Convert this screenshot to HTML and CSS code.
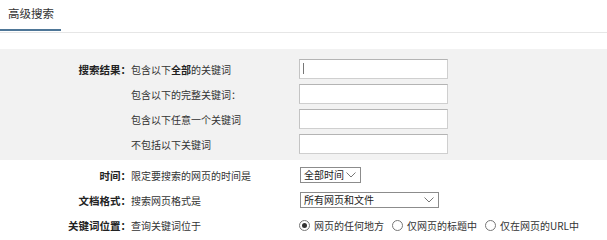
FILE: index.html
```html
<!DOCTYPE html>
<html lang="zh-CN">
<head>
<meta charset="utf-8">
<title>高级搜索</title>
<link rel="stylesheet" href="styles.css">
</head>
<body>
<div class="tabs">
  <div class="tab active">高级搜索</div>
</div>

<div class="section grey">
  <div class="row">
    <div class="label">搜索结果：</div>
    <div class="desc">包含以下<b>全部</b>的关键词</div>
    <div class="control"><div class="field"><input class="text" type="text"><span class="caret"></span></div></div>
  </div>
  <div class="row">
    <div class="label"></div>
    <div class="desc">包含以下的完整关键词：</div>
    <div class="control"><div class="field"><input class="text" type="text"></div></div>
  </div>
  <div class="row">
    <div class="label"></div>
    <div class="desc">包含以下任意一个关键词</div>
    <div class="control"><div class="field"><input class="text" type="text"></div></div>
  </div>
  <div class="row">
    <div class="label"></div>
    <div class="desc">不包括以下关键词</div>
    <div class="control"><div class="field"><input class="text" type="text"></div></div>
  </div>
</div>

<div class="section plain">
  <div class="row short">
    <div class="label">时间：</div>
    <div class="desc">限定要搜索的网页的时间是</div>
    <div class="control">
      <div class="select sel-time"><span>全部时间</span>
        <svg class="chev" viewBox="0 0 10 6" width="10" height="6"><path d="M0.5 0.5 L5 5 L9.5 0.5" fill="none" stroke="#777" stroke-width="1"/></svg>
      </div>
    </div>
  </div>
  <div class="row short">
    <div class="label">文档格式：</div>
    <div class="desc">搜索网页格式是</div>
    <div class="control">
      <div class="select sel-format"><span>所有网页和文件</span>
        <svg class="chev" viewBox="0 0 10 6" width="10" height="6"><path d="M0.5 0.5 L5 5 L9.5 0.5" fill="none" stroke="#777" stroke-width="1"/></svg>
      </div>
    </div>
  </div>
  <div class="row short">
    <div class="label">关键词位置：</div>
    <div class="desc">查询关键词位于</div>
    <div class="control radios">
      <label class="radio"><span class="dot on"></span>网页的任何地方</label>
      <label class="radio"><span class="dot"></span>仅网页的标题中</label>
      <label class="radio"><span class="dot"></span>仅在网页的URL中</label>
    </div>
  </div>
</div>
</body>
</html>
```

FILE: styles.css
```css
html, body {
  margin: 0;
  padding: 0;
  background: #ffffff;
}
body {
  font-family: "Noto Sans CJK SC", "Microsoft YaHei", sans-serif;
  font-size: 10px;
  color: #333333;
  width: 607px;
  height: 238px;
  overflow: hidden;
}

.tabs {
  display: flex;
  height: 32px;
  border-bottom: 1px solid #e6e6e6;
}
.tab {
  padding: 0 7px 0 8px;
  font-size: 11.5px;
  line-height: 27px;
  color: #333;
  width: 46px;
}
.tab.active {
  border-bottom: 2px solid #4e7697;
  height: 29px;
}

.section {
  display: flex;
  flex-direction: column;
}
.grey {
  margin-top: 16px;
  background: #f2f2f2;
  padding: 10px 0 6px;
  gap: 5px;
}
.plain {
  padding: 7px 0 0;
  gap: 9px;
}

.row {
  display: grid;
  grid-template-columns: 131px 168px 1fr;
  align-items: center;
  height: 20px;
}
.row.short {
  height: 16px;
}
.label {
  text-align: right;
  font-weight: bold;
  color: #222;
  font-size: 10.5px;
}
.desc b {
  font-weight: bold;
  color: #222;
}

.field {
  position: relative;
  width: 149px;
  height: 20px;
}
.text {
  box-sizing: border-box;
  width: 149px;
  height: 20px;
  margin: 0;
  padding: 0 3px;
  border: 1px solid #cfcfcf;
  border-top-color: #b4b4b4;
  border-left-color: #c4c4c4;
  background: #ffffff;
  outline: none;
}
.caret {
  position: absolute;
  left: 4px;
  top: 4px;
  width: 1px;
  height: 11px;
  background: #777;
}

.select {
  box-sizing: border-box;
  height: 16px;
  margin-left: 1px;
  border: 1px solid #8c8c8c;
  background: #fff;
  display: flex;
  align-items: center;
  justify-content: space-between;
  padding: 0 4px 0 3px;
  color: #222;
  line-height: 14px;
}
.sel-time { width: 61px; }
.sel-format { width: 139px; }
.chev { display: block; }

.radios {
  display: flex;
  align-items: center;
  gap: 8px;
  white-space: nowrap;
}
.radio {
  display: flex;
  align-items: center;
  gap: 4px;
}
.dot {
  box-sizing: border-box;
  width: 11px;
  height: 11px;
  border-radius: 50%;
  border: 1px solid #777;
  background: #fff;
  display: flex;
  align-items: center;
  justify-content: center;
}
.dot.on::after {
  content: "";
  width: 5px;
  height: 5px;
  border-radius: 50%;
  background: #333;
}
```
